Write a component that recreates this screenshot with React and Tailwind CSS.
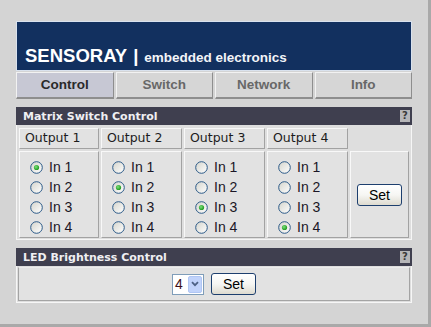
import React from 'react';

const tabs = ['Control', 'Switch', 'Network', 'Info'];
const outputs = [1, 2, 3, 4];

function Radio({ checked }) {
  return (
    <svg width="13" height="13" viewBox="0 0 13 13" className="shrink-0">
      <defs>
        <linearGradient id="radioFill" x1="0" y1="0" x2="1" y2="1">
          <stop offset="0" stopColor="#d4d4cc" />
          <stop offset="1" stopColor="#ffffff" />
        </linearGradient>
        <radialGradient id="radioDot" cx="0.4" cy="0.4" r="0.6">
          <stop offset="0" stopColor="#7be07a" />
          <stop offset="1" stopColor="#1f9a1f" />
        </radialGradient>
      </defs>
      <circle cx="6.5" cy="6.5" r="5.8" fill="url(#radioFill)" stroke="#2c5a88" strokeWidth="1" />
      {checked && <circle cx="6.5" cy="6.5" r="2.6" fill="url(#radioDot)" />}
    </svg>
  );
}

function XpButton({ children }) {
  return (
    <button className="w-[45px] h-[22px] rounded-[3px] border border-[#1d3f6e] bg-linear-to-b from-white via-[#f6f6f3] to-[#dedbd0] text-[14px] leading-none text-black font-['Liberation_Sans',Arial,sans-serif] flex items-center justify-center">
      {children}
    </button>
  );
}

function PanelHeader({ title }) {
  return (
    <div className="h-[18px] bg-[#3f3f4f] flex items-center justify-between pl-[7px] pr-[2px]">
      <span className="text-[11px] font-bold text-[#efeff2] font-['DejaVu_Sans',Verdana,sans-serif] leading-none">{title}</span>
      <span className="w-[10px] h-[12px] bg-[#b6b6b8] text-[#3a3a3a] text-[10px] font-bold leading-[12px] text-center font-['DejaVu_Sans',Verdana,sans-serif]">?</span>
    </div>
  );
}

export default function App() {
  return (
    <div className="w-[431px] h-[327px] bg-[#a9a9a9]">
      <div className="w-[428px] h-[324px] bg-[#d4d4d4] pt-[21px] px-[16px]">
        {/* banner */}
        <div className="h-[50px] bg-[#12305f] border border-[#d9e2ee] flex items-end pb-[5px] pl-[8px] text-white font-['Liberation_Sans',Arial,sans-serif] font-bold">
          <div className="flex items-baseline leading-none">
            <span className="text-[18.5px]">SENSORAY</span>
            <span className="text-[18.5px] ml-[6px]">|</span>
            <span className="text-[13.5px] ml-[6px] text-[#f2f4f8]">embedded electronics</span>
          </div>
        </div>

        {/* tabs */}
        <div className="mt-[1px] grid grid-cols-4 gap-[2px]">
          {tabs.map((t, i) => (
            <div
              key={t}
              className={
                'h-[27px] border-t border-l border-r border-b-2 border-t-[#f2f2f2] border-l-[#f2f2f2] border-r-[#8e8e8e] border-b-[#8e8e8e] flex items-center justify-center text-[13.5px] font-bold font-[\'Liberation_Sans\',Arial,sans-serif] ' +
                (i === 0 ? 'bg-[#c7c8d4] text-[#2a2a2a]' : 'bg-[#d6d6d6] text-[#686868]')
              }
            >
              {t}
            </div>
          ))}
        </div>

        {/* matrix switch panel */}
        <div className="mt-[8px]">
          <PanelHeader title="Matrix Switch Control" />
          <div className="border border-t-0 border-[#f6f6f6] bg-[#dedede] px-[2px] pt-[3px] pb-[1px]">
            <div className="grid grid-cols-[80px_81px_81px_81px_1fr] grid-rows-[21px_87px] gap-[2px]">
              {outputs.map((o) => (
                <div
                  key={'h' + o}
                  className="border border-t-[#f8f8f8] border-l-[#f8f8f8] border-r-[#a2a2a2] border-b-[#a2a2a2] bg-[#e2e2e2] pl-[5px] flex items-center text-[12.5px] text-[#1c1c1c] font-['DejaVu_Sans',Verdana,sans-serif] leading-none"
                >
                  Output {o}
                </div>
              ))}
              <div />
              {outputs.map((o) => (
                <div
                  key={'r' + o}
                  className="border border-t-[#f8f8f8] border-l-[#f8f8f8] border-r-[#a2a2a2] border-b-[#a2a2a2] bg-[#e2e2e2] pl-[10px] pt-[5px] flex flex-col"
                >
                  {[1, 2, 3, 4].map((n) => (
                    <label key={n} className="h-[20px] flex items-center gap-[6px] text-[14px] leading-none text-[#1b1626] font-['Liberation_Sans',Arial,sans-serif]">
                      <Radio checked={n === o} />
                      <span>In {n}</span>
                    </label>
                  ))}
                </div>
              ))}
              <div className="border border-t-[#f8f8f8] border-l-[#f8f8f8] border-r-[#a2a2a2] border-b-[#a2a2a2] bg-[#e2e2e2] flex items-center justify-center">
                <XpButton>Set</XpButton>
              </div>
            </div>
          </div>
        </div>

        {/* LED brightness panel */}
        <div className="mt-[8px]">
          <PanelHeader title="LED Brightness Control" />
          <div className="border border-t-0 border-[#f6f6f6] bg-[#dedede] p-[1px]">
            <div className="h-[34px] border border-t-[#ececec] border-l-[#a4a4a4] border-r-[#a4a4a4] border-b-[#a4a4a4] bg-[#e2e2e2] flex items-center justify-center gap-[7px]">
              <div className="w-[32px] h-[21px] border border-[#7f9db9] bg-white flex items-center">
                <span className="pl-[2px] text-[14px] leading-none text-[#3d0d18] font-['Liberation_Sans',Arial,sans-serif]">4</span>
                <div className="ml-auto mr-[1px] w-[14px] h-[17px] rounded-[2px] bg-[#c1d3fb] border border-[#b0c6f4] flex items-center justify-center">
                  <svg width="8" height="6" viewBox="0 0 8 6">
                    <path d="M1 1.2 L4 4.2 L7 1.2" fill="none" stroke="#4d6185" strokeWidth="1.8" />
                  </svg>
                </div>
              </div>
              <XpButton>Set</XpButton>
            </div>
          </div>
        </div>
      </div>
    </div>
  );
}
